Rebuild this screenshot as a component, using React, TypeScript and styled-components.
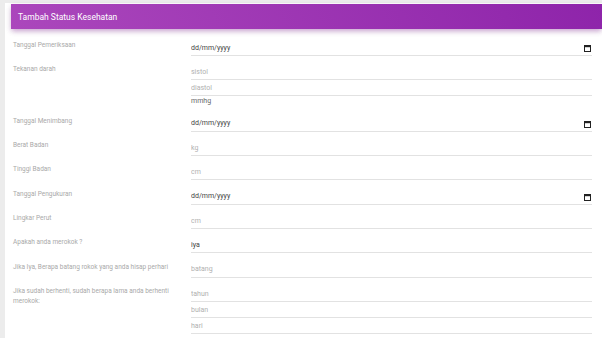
import React from "react";
import styled, { createGlobalStyle } from "styled-components";

const GlobalStyle = createGlobalStyle`
  html, body {
    margin: 0;
    padding: 0;
    background: #ececec;
    font-family: Roboto, "Liberation Sans", Arial, sans-serif;
  }
`;

const Page = styled.div`
  padding: 3px 0 0 5px;
  height: 335px;
  overflow: hidden;
`;

const Card = styled.div`
  background: #fff;
  min-height: 400px;
  padding-top: 1px;
`;

const Header = styled.div`
  margin-left: 6px;
  height: 25px;
  display: flex;
  align-items: center;
  padding-left: 7px;
  background: linear-gradient(60deg, #ab47bc, #8e24aa);
  box-shadow: 0 3px 5px -1px rgba(156, 39, 176, 0.35),
    0 2px 6px rgba(0, 0, 0, 0.12);
  color: #fff;
  font-size: 8.5px;
`;

const Form = styled.form`
  padding: 11px 10px 0 8px;
`;

const Row = styled.div`
  display: grid;
  grid-template-columns: 178px 1fr;
  margin-bottom: 8.35px;
`;

const Label = styled.label`
  padding: 0 12px 0 0;
  font-size: 6.5px;
  line-height: 10px;
  color: #a9a9a9;
`;

const Fields = styled.div`
  display: flex;
  flex-direction: column;
`;

const InputWrap = styled.div`
  position: relative;
`;

const Input = styled.input<{ $dark?: boolean }>`
  display: block;
  box-sizing: border-box;
  width: 100%;
  height: 16px;
  padding: 0;
  border: none;
  border-bottom: 1px solid #e2e2e2;
  background: transparent;
  font-family: inherit;
  font-size: 7px;
  color: #444;
  outline: none;

  &::placeholder {
    color: ${(p) => (p.$dark ? "#444" : "#b0b0b0")};
  }
`;

const CalendarIcon = styled.svg`
  position: absolute;
  right: 1px;
  top: 5px;
  width: 7px;
  height: 7px;
`;

const Helper = styled.div`
  font-size: 7px;
  line-height: 10px;
  color: #666;
  padding-bottom: 1px;
`;

type Field = { placeholder: string; date?: boolean; dark?: boolean; value?: string };
type RowData = { label: string; fields: Field[]; helper?: string };

const rows: RowData[] = [
  { label: "Tanggal Pemeriksaan", fields: [{ placeholder: "dd/mm/yyyy", date: true, dark: true }] },
  {
    label: "Tekanan darah",
    fields: [{ placeholder: "sistol" }, { placeholder: "diastol" }],
    helper: "mmhg",
  },
  { label: "Tanggal Menimbang", fields: [{ placeholder: "dd/mm/yyyy", date: true, dark: true }] },
  { label: "Berat Badan", fields: [{ placeholder: "kg" }] },
  { label: "Tinggi Badan", fields: [{ placeholder: "cm" }] },
  { label: "Tanggal Pengukuran", fields: [{ placeholder: "dd/mm/yyyy", date: true, dark: true }] },
  { label: "Lingkar Perut", fields: [{ placeholder: "cm" }] },
  { label: "Apakah anda merokok ?", fields: [{ placeholder: "", value: "iya" }] },
  { label: "Jika Iya, Berapa batang rokok yang anda hisap perhari", fields: [{ placeholder: "batang" }] },
  {
    label: "Jika sudah berhenti, sudah berapa lama anda berhenti merokok:",
    fields: [{ placeholder: "tahun" }, { placeholder: "bulan" }, { placeholder: "hari" }],
  },
];

const Calendar = () => (
  <CalendarIcon viewBox="0 0 7 7">
    <rect x="0.5" y="0.5" width="6" height="6" fill="none" stroke="#222" strokeWidth="1" />
    <rect x="0" y="0" width="7" height="2.2" fill="#222" />
  </CalendarIcon>
);

export default function App() {
  return (
    <>
      <GlobalStyle />
      <Page>
        <Card>
          <Header>Tambah Status Kesehatan</Header>
          <Form>
            {rows.map((row) => (
              <Row key={row.label}>
                <Label>{row.label}</Label>
                <Fields>
                  {row.fields.map((f, i) => (
                    <InputWrap key={i}>
                      <Input
                        placeholder={f.placeholder}
                        $dark={f.dark}
                        defaultValue={f.value}
                      />
                      {f.date && <Calendar />}
                    </InputWrap>
                  ))}
                  {row.helper && <Helper>{row.helper}</Helper>}
                </Fields>
              </Row>
            ))}
          </Form>
        </Card>
      </Page>
    </>
  );
}
